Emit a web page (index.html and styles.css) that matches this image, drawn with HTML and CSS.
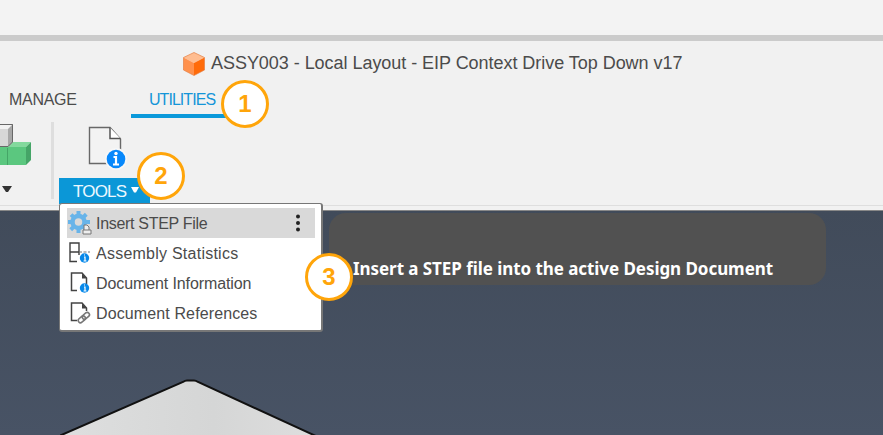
FILE: index.html
```html
<!DOCTYPE html>
<html lang="en">
<head>
<meta charset="utf-8">
<title>ASSY003 - Local Layout</title>
<link rel="stylesheet" href="styles.css">
</head>
<body>
<div class="app">
  <div class="window-strip"></div>
  <header class="title-bar">
    <svg class="cube" width="22" height="24" viewBox="0 0 22 24"><path d="M11 .5 21.500 5.500 11 11 .5 5.500Z" fill="#ffbd91"/><path d="M.5 5.500 11 11v12.500L.5 18Z" fill="#ff914d"/><path d="M21.500 5.500 11 11v12.500L21.500 18Z" fill="#ff6b0a"/><path d="M11 .5 21.500 5.500V18L11 23.500.5 18V5.500Z" fill="none" stroke="#e58043" stroke-width=".7"/></svg>
    <h1 class="title">ASSY003 - Local Layout - EIP Context Drive Top Down v17</h1>
  </header>
  <nav class="tabs">
    <span class="tab manage">MANAGE</span>
    <span class="tab utilities">UTILITIES</span>
    <span class="badge one">1</span>
  </nav>
  <section class="toolbar">
    <div class="group make">
      <svg width="33" height="46" viewBox="0 0 33 46"><path d="M0 23 3 18H31L26 23Z" fill="#83d99d"/><path d="M0 23H26V41H0Z" fill="#5bc77f"/><path d="m26 23 5-5V36l-5 5Z" fill="#45a567"/><path d="M7.500 24v17" stroke="#45a567"/><path d="M0 0H13V18L8 23H0Z" fill="#a7a7a7"/><path d="M0 1H12L8 5H0Z" fill="#f2f2f2"/><path d="M0 5H8V22H0Z" fill="#d7d7d7"/><path d="M0 .5H12.500V18L8 22.500H0" fill="none" stroke="#686868"/></svg>
      <svg class="make-arrow" width="10" height="7" viewBox="0 0 10 7"><path d="M0 0h10L6 6H4Z" fill="#333"/></svg>
    </div>
    <div class="divider"></div>
    <div class="group tools">
      <svg class="doc-info" width="40" height="46" viewBox="0 0 40 46"><path d="M2.500 3.500H23L33.500 15V39.500H2.500Z" fill="#f3f3f3" stroke="#686868" stroke-width="1.400"/><path d="M23 3.500V14.500H33.500" fill="#fff" stroke="#555" stroke-width="1.500"/><circle cx="29" cy="35" r="11" fill="#f7f7f7"/><circle cx="29" cy="35" r="9.300" fill="#0788fb"/><path d="M26.500 33h2.500v7M26 40.500h6" fill="none" stroke="#fff" stroke-width="2.200"/><circle cx="29" cy="29.500" r="1.700" fill="#fff"/></svg>
      <button class="tools-button"><span>TOOLS</span><svg width="8" height="6" viewBox="0 0 8 6"><path d="M0 0h8L5 5.500H3Z" fill="#fff"/></svg></button>
      <span class="badge two">2</span>
      <div class="menu">
        <div class="item selected">
          <svg width="26" height="26" viewBox="0 0 26 26"><g fill="#68b4e9"><path d="M9.500 1h4v4h-4zM9.500 19h4v4h-4zM1 10h4v4H1zM18 10h5v4h-5z"/><path d="M9.500 1h4v4h-4zM9.500 19h4v4h-4zM1 10h4v4H1zM18 10h5v4h-5z" transform="rotate(45 11.500 12)"/></g><circle cx="11.500" cy="12" r="6" fill="none" stroke="#68b4e9" stroke-width="4.500"/><path d="M17 20v-5h3l2 2v3M16 20h8v4h-8Z" fill="#eee" stroke="#777"/></svg>
          <span class="label l1">Insert STEP File</span>
          <svg class="more" width="6" height="20" viewBox="0 0 6 20"><g fill="#222"><circle cx="3" cy="3.500" r="2"/><circle cx="3" cy="10" r="2"/><circle cx="3" cy="16.500" r="2"/></g></svg>
        </div>
        <div class="item">
          <svg width="26" height="26" viewBox="0 0 26 26"><path d="M3 3h9v9H3zM3 12v9.500h7M12 12v3" fill="none" stroke="#3f3f3f" stroke-width="1.400"/><path d="M12 12h11" stroke="#777" stroke-dasharray="3 1.500"/><circle cx="17.500" cy="18" r="4.700" fill="#0788e9"/><path d="M17 17h1v4M16.500 21h3M17 15h1" fill="none" stroke="#fff" stroke-width="1.200"/></svg>
          <span class="label l2">Assembly Statistics</span>
        </div>
        <div class="item">
          <svg width="26" height="26" viewBox="0 0 26 26"><path d="M10 20.500H4.500V3H15L19.500 8V14" fill="none" stroke="#444" stroke-width="1.500"/><path d="M15 3.500v5h5Z" fill="#444"/><circle cx="17.500" cy="18" r="4.700" fill="#0788e9"/><path d="M17 17h1v4M16.500 21h3M17 15h1" fill="none" stroke="#fff" stroke-width="1.200"/></svg>
          <span class="label l3">Document Information</span>
        </div>
        <div class="item">
          <svg width="26" height="26" viewBox="0 0 26 26"><path d="M10 20.500H4.500V3H15L19.500 8V11" fill="none" stroke="#444" stroke-width="1.500"/><path d="M15 3.500v5h5Z" fill="#444"/><g fill="none" stroke="#777" stroke-width="1.600"><rect x="11" y="17" width="8" height="4.500" rx="2.200" transform="rotate(-40 15 19.500)"/><rect x="15" y="13.500" width="8" height="4.500" rx="2.200" transform="rotate(-40 19 16)"/></g></svg>
          <span class="label l4">Document References</span>
        </div>
        <span class="badge three">3</span>
      </div>
    </div>
  </section>
  <main class="viewport">
    <div class="tooltip"><span>Insert a STEP file into the active Design Document</span></div>
    <svg class="model" width="270" height="58" viewBox="0 0 270 58"><defs><linearGradient id="face"><stop stop-color="#dedfdf"/><stop offset=".6" stop-color="#d5d6d6"/><stop offset="1" stop-color="#dedede"/></linearGradient></defs><path d="M-2 59.500 123 5Q125 3.500 127 3.500H134Q136 3.500 138 5L258 60" fill="url(#face)" stroke="#111" stroke-width="2"/></svg>
  </main>
</div>
</body>
</html>
```
FILE: styles.css
```css
* { box-sizing: border-box; }
body { margin: 0; font-family: "Liberation Sans", Arial, sans-serif; color: #4b4b4b; }
.app { width: 883px; height: 435px; display: flex; flex-direction: column; overflow: hidden; background: #f1f1f1; }
.window-strip { height: 41px; background: #f3f3f3; border-bottom: 6px solid #cbcbcb; flex: none; }
.title-bar { height: 43px; display: flex; align-items: center; padding-left: 183px; gap: 6px; flex: none; }
.cube { margin-top: 2px; }
.title { margin: 2px 0 0; font-size: 18px; font-weight: 400; white-space: nowrap; letter-spacing: -.04px; }
.tabs { position: relative; height: 35px; display: flex; flex: none; font-size: 16px; line-height: 32px; }
.tab { white-space: nowrap; }
.manage { width: 131px; padding-left: 9px; letter-spacing: -.3px; }
.utilities { width: 100px; height: 34px; padding-left: 18px; color: #1495d8; border-bottom: 4px solid #0b99da; letter-spacing: -.95px; }
.toolbar { height: 92px; display: flex; position: relative; z-index: 2; flex: none; background: linear-gradient(#dedede, #dedede) 0 86px / 100% 1px no-repeat; border-bottom: 1px solid #888; }
.group { display: flex; flex-direction: column; align-items: flex-start; }
.make { width: 51px; padding-top: 5px; }
.make-arrow { margin: 16px 0 0 2px; }
.divider { width: 3px; height: 77px; margin-top: 3px; background: #dedede; }
.tools { position: relative; padding: 5px 0 0 5px; }
.doc-info { margin-left: 28px; }
.tools-button { width: 91px; height: 26px; margin-top: 8px; padding: 1px 0 0 14px; border: 0; display: flex; align-items: center; gap: 5px; background: #0b97d7; color: #edf8ff; font: 17px "Liberation Sans", sans-serif; letter-spacing: -.8px; }
.tools-button svg { margin-top: -4px; }
.badge { position: absolute; width: 48px; height: 48px; border: 3px solid #ffa50a; border-radius: 50%; background: #fff; color: #ffa50a; font: bold 24px/42px "Liberation Sans", sans-serif; letter-spacing: 0; text-align: center; }
.one { left: 221px; top: -4px; z-index: 3; }
.two { left: 83px; top: 33px; z-index: 4; }
.three { left: 245px; top: 49px; }
.menu { position: absolute; left: 5px; top: 84px; width: 264px; height: 129px; padding: 4px 6px 5px 7px; background: #fff; border: 1px solid #777; border-width: 1px 2px 2px 1px; border-radius: 3px; }
.item { height: 30px; display: flex; align-items: center; font-size: 16px; }
.item > svg:first-child { flex: none; }
.label { margin: 1px 0 0 3px; white-space: nowrap; }
.l1 { letter-spacing: -.3px; }
.l2 { letter-spacing: .24px; }
.l3 { letter-spacing: -.1px; }
.l4 { letter-spacing: .12px; }
.selected { width: 248px; background: #d9d9d9; }
.more { margin-left: auto; margin-right: 14px; }
.viewport { flex: 1; position: relative; background: linear-gradient(#414b5a, #485365); }
.tooltip { position: absolute; left: 329px; top: 2px; width: 497px; height: 72px; border-radius: 17px; background: #515151; padding: 45px 0 0 24px; color: #fff; font: bold 17px/22px "Noto Sans", sans-serif; letter-spacing: -.06px; white-space: nowrap; }
.model { position: absolute; left: 60px; bottom: 0; }
```
